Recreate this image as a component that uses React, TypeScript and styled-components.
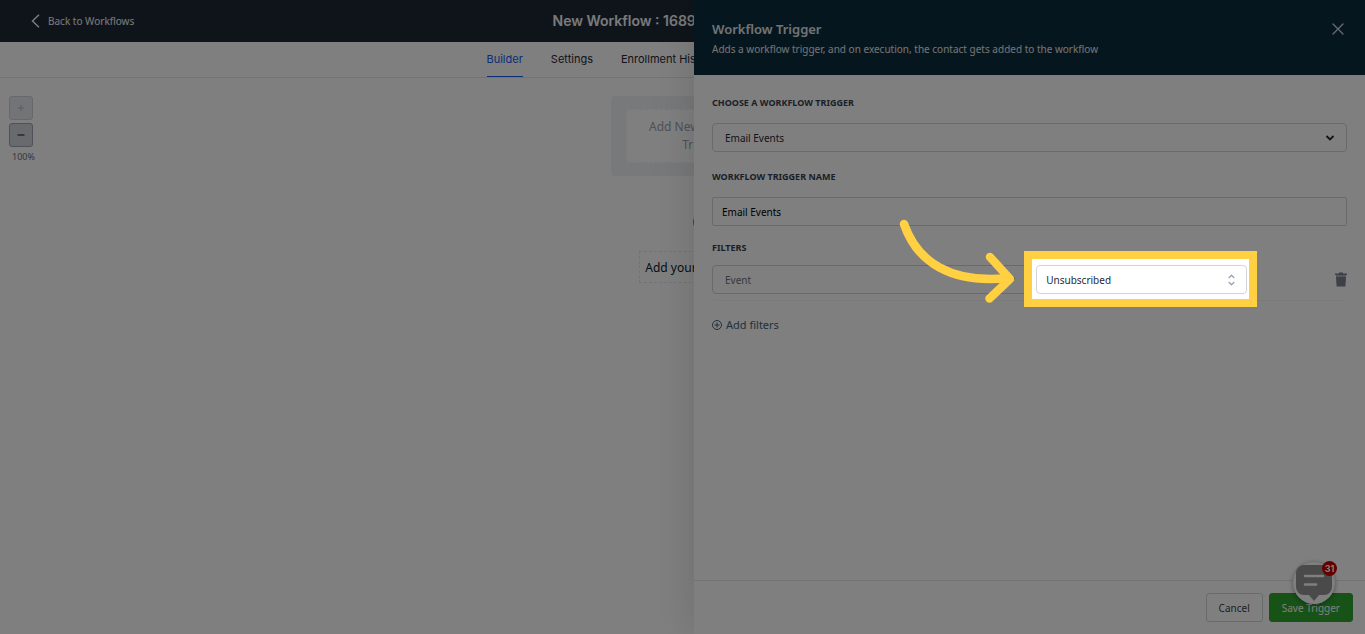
import React from "react";
import styled, { createGlobalStyle } from "styled-components";

const GlobalStyle = createGlobalStyle`
  *, *::before, *::after { box-sizing: border-box; }
  html, body { margin: 0; height: 100%; overflow: hidden; }
  body { background: #fff; font-family: "Noto Sans", "Open Sans", sans-serif; color: #1f2937; }
  #root { height: 100%; }
  button, input, select { font: inherit; color: inherit; }
  h1, h2, p { margin: 0; }
`;

const Page = styled.div`
  position: relative;
  height: 100%;
  display: flex;
  flex-direction: column;
`;

const TopBar = styled.header`
  flex: none;
  height: 42px;
  display: grid;
  grid-template-columns: 1fr 260px 1fr;
  align-items: center;
  background: #1f2937;
  color: #fff;
`;

const BackLink = styled.a`
  display: flex;
  align-items: center;
  gap: 8px;
  padding-left: 31px;
  color: #f3f4f6;
  font-size: 10px;
  line-height: 16px;
  text-decoration: none;
`;

const WorkflowTitle = styled.h1`
  font: 600 14px/20px Inter, sans-serif;
  white-space: nowrap;
  color: #f3f4f6;
`;

const Tabs = styled.nav`
  flex: none;
  height: 36px;
  display: flex;
  justify-content: center;
  border-bottom: 1px solid #e5e7eb;
`;

const TabList = styled.div`
  width: 392px;
  display: flex;
  gap: 28px;
`;

const Tab = styled.a<{ $active?: boolean }>`
  height: 35px;
  border-bottom: 1px solid ${(p) => (p.$active ? "#155eef" : "transparent")};
  color: ${(p) => (p.$active ? "#155eef" : "#1f2937")};
  font: 400 11px/34px Inter, sans-serif;
  white-space: nowrap;
  text-decoration: none;
`;

const Canvas = styled.main`
  flex: 1;
  display: flex;
  padding-top: 18px;
`;

const ZoomControls = styled.div`
  width: 40px;
  padding-left: 9px;
  display: flex;
  flex-direction: column;
  gap: 3px;
`;

const ZoomButton = styled.button`
  width: 24px;
  height: 24px;
  padding: 0;
  display: grid;
  place-items: center;
  border: 1px solid #9ca3af;
  border-radius: 3px;
  background: #d1d5db;
  color: #6b7280;
  &:disabled { opacity: 0.5; }
`;

const ZoomLevel = styled.span`
  padding-left: 3px;
  font-size: 9px;
  line-height: 14px;
  color: #6b7280;
`;

const Flow = styled.div`
  flex: 1;
  display: flex;
  flex-direction: column;
  align-items: center;
`;

const TriggerGroup = styled.div`
  width: 183px;
  padding: 13px 15px;
  border-radius: 4px;
  background: #f1f2f4;
`;

const AddTrigger = styled.button`
  width: 100%;
  height: 54px;
  padding: 0 20px;
  border: 1px dashed #f1f2f4;
  border-radius: 4px;
  background: #fff;
  color: #9ca3af;
  font-size: 12px;
  line-height: 18px;
`;

const StepDot = styled.button`
  width: 20px;
  height: 20px;
  margin: 36px 0 19px;
  padding: 0;
  border: 3px solid #64748b;
  border-radius: 50%;
  background: #fff;
`;

const AddAction = styled.button`
  height: 32px;
  padding: 0 5px;
  border: 1px dashed #e5e7eb;
  background: #fff;
  color: #111827;
  font-size: 12px;
`;

const Drawer = styled.aside`
  position: absolute;
  top: 0;
  right: 0;
  bottom: 0;
  width: 671px;
  max-width: 100%;
  display: flex;
  flex-direction: column;
  background: #fff;
  box-shadow: 0 0 40px rgba(0, 0, 0, 0.15);
`;

const DrawerHeader = styled.div`
  flex: none;
  height: 75px;
  padding: 19px 20px 0 18px;
  display: flex;
  justify-content: space-between;
  align-items: flex-start;
  background: #0b2d3d;
  color: #fff;
`;

const DrawerTitle = styled.h2`
  font-size: 13px;
  line-height: 20px;
  font-weight: 600;
  color: #e5e7eb;
`;

const DrawerSubtitle = styled.p`
  font-size: 10px;
  line-height: 20px;
  color: #e5e7eb;
`;

const IconButton = styled.button`
  padding: 0;
  display: flex;
  border: 0;
  background: none;
  color: #7a808c;
`;

const CloseButton = styled(IconButton)`
  margin-top: 3px;
  color: #d1d5f0;
`;

const DrawerBody = styled.form`
  flex: 1;
  padding: 20px 18px 0;
`;

const FieldLabel = styled.label`
  display: block;
  margin-bottom: 12px;
  font-size: 9px;
  line-height: 16px;
  font-weight: 700;
  text-transform: uppercase;
  color: #374151;
`;

const Field = styled.div`
  margin-bottom: 17px;
  & + & { margin-bottom: 14px; }
`;

const Control = styled.div`
  position: relative;
`;

const SelectBox = styled.select<{ $muted?: boolean; $tight?: boolean }>`
  display: block;
  width: 100%;
  height: 29px;
  padding: 0 ${(p) => (p.$tight ? 9 : 12)}px;
  appearance: none;
  border: 1px solid #d1d5db;
  border-radius: 4px;
  background: #fff;
  font-size: 10px;
  color: ${(p) => (p.$muted ? "#6b7280" : "#1f2937")};
`;

const TextInput = styled.input`
  display: block;
  width: 100%;
  height: 29px;
  padding: 0 9px;
  border: 1px solid #d1d5db;
  border-radius: 2px;
  font-size: 10px;
  color: #000;
`;

const SelectIcon = styled.svg`
  position: absolute;
  top: 50%;
  right: 12px;
  transform: translateY(-50%);
  pointer-events: none;
`;

const Filters = styled.fieldset`
  margin: 0;
  padding: 0 0 6px;
  min-width: 0;
  border: 1px solid #f3f4f6;
  border-width: 0 0 1px;
  border-radius: 4px;
`;

const FiltersTitle = styled.legend`
  padding: 0 0 9px;
  font-size: 9px;
  line-height: 16px;
  font-weight: 700;
  text-transform: uppercase;
  color: #374151;
`;

const FilterRow = styled.div`
  display: grid;
  grid-template-columns: 3fr 2fr 92px;
  gap: 8px;
  align-items: center;
`;

const TrashCell = styled.div`
  display: flex;
  justify-content: flex-end;
`;

/* Frame around the highlighted control; its spread shadow dims everything else. */
const Spotlight = styled.div`
  position: absolute;
  inset: -14px -10px -13px -12px;
  z-index: 20;
  border: 8px solid #ffd042;
  box-shadow: 0 0 0 3000px rgba(0, 0, 0, 0.5);
  pointer-events: none;
`;

const PointerArrow = styled.svg`
  position: absolute;
  top: -47px;
  left: -138px;
  z-index: 21;
  pointer-events: none;
`;

const AddFilters = styled.button`
  margin-top: 14px;
  padding: 0;
  display: flex;
  align-items: center;
  gap: 4px;
  border: 0;
  background: none;
  color: #3f6478;
  font-size: 11px;
  line-height: 20px;
`;

const DrawerFooter = styled.div`
  flex: none;
  padding: 12px;
  display: flex;
  justify-content: flex-end;
  gap: 6px;
  border-top: 1px solid #e5e7eb;
`;

const Button = styled.button<{ $primary?: boolean }>`
  height: 29px;
  padding: 0 12px;
  border: 1px solid ${(p) => (p.$primary ? "#2fa52f" : "#d1d5db")};
  border-radius: 3px;
  background: ${(p) => (p.$primary ? "#2fa52f" : "#fff")};
  color: ${(p) => (p.$primary ? "#fff" : "#374151")};
  font-size: 10px;
`;

const ChatButton = styled.button`
  position: fixed;
  right: 30px;
  bottom: 30px;
  z-index: 5;
  width: 42px;
  height: 42px;
  padding: 0;
  display: grid;
  place-items: center;
  border: 0;
  border-radius: 50%;
  background: #fff;
  box-shadow: 0 1px 5px rgba(0, 0, 0, 0.4);
`;

const ChatBadge = styled.span`
  position: absolute;
  top: -1px;
  right: -2px;
  width: 15px;
  height: 15px;
  border-radius: 50%;
  background: #c80000;
  color: #fff;
  font: 700 9px/15px Inter, sans-serif;
  text-align: center;
`;

export default function App() {
  return (
    <>
      <GlobalStyle />
      <Page>
        <TopBar>
          <BackLink href="#workflows">
            <svg width="9" height="14" viewBox="0 0 9 14" fill="none" stroke="currentColor" strokeWidth="1.5">
              <path d="M8 .7 1.5 7 8 13.3" />
            </svg>
            Back to Workflows
          </BackLink>
          <WorkflowTitle>New Workflow : 1689</WorkflowTitle>
        </TopBar>
        <Tabs>
          <TabList>
            <Tab href="#builder" $active>Builder</Tab>
            <Tab href="#settings">Settings</Tab>
            <Tab href="#history">Enrollment History</Tab>
          </TabList>
        </Tabs>
        <Canvas>
          <ZoomControls>
            <ZoomButton aria-label="Zoom in" disabled>
              <svg width="6" height="6" viewBox="0 0 6 6" stroke="currentColor"><path d="M3 0v6M0 3h6" /></svg>
            </ZoomButton>
            <ZoomButton aria-label="Zoom out">
              <svg width="8" height="8" viewBox="0 0 8 8" stroke="currentColor" strokeWidth="2"><path d="M.5 4h7" /></svg>
            </ZoomButton>
            <ZoomLevel>100%</ZoomLevel>
          </ZoomControls>
          <Flow>
            <TriggerGroup>
              <AddTrigger>Add New Workflow Trigger</AddTrigger>
            </TriggerGroup>
            <StepDot aria-label="Add step" />
            <AddAction>Add your first action</AddAction>
          </Flow>
        </Canvas>

        <Drawer aria-label="Workflow Trigger">
          <DrawerHeader>
            <div>
              <DrawerTitle>Workflow Trigger</DrawerTitle>
              <DrawerSubtitle>Adds a workflow trigger, and on execution, the contact gets added to the workflow</DrawerSubtitle>
            </div>
            <CloseButton aria-label="Close">
              <svg width="14" height="14" viewBox="0 0 14 14" stroke="currentColor" strokeWidth="1.3" strokeLinecap="round">
                <path d="m2 2 10 10M12 2 2 12" />
              </svg>
            </CloseButton>
          </DrawerHeader>
          <DrawerBody onSubmit={(e) => e.preventDefault()}>
            <Field>
              <FieldLabel htmlFor="trigger">Choose a workflow trigger</FieldLabel>
              <Control>
                <SelectBox id="trigger"><option>Email Events</option></SelectBox>
                <SelectIcon width="10" height="8" viewBox="0 0 10 8" fill="none" stroke="#1f2937" strokeWidth="1.8">
                  <path d="m1.5 2 3.5 3.5L8.500 2" />
                </SelectIcon>
              </Control>
            </Field>
            <Field>
              <FieldLabel htmlFor="trigger-name">Workflow trigger name</FieldLabel>
              <TextInput id="trigger-name" defaultValue="Email Events" />
            </Field>
            <Filters>
              <FiltersTitle>Filters</FiltersTitle>
              <FilterRow>
                <Control>
                  <SelectBox aria-label="Filter field" $muted><option>Event</option></SelectBox>
                  <SelectIcon width="10" height="8" viewBox="0 0 10 8" fill="none" stroke="#1f2937" strokeWidth="1.8">
                    <path d="m1.5 2 3.5 3.5L8.500 2" />
                  </SelectIcon>
                </Control>
                <Control>
                  <SelectBox aria-label="Event type" $tight><option>Unsubscribed</option></SelectBox>
                  <SelectIcon width="7" height="12" viewBox="0 0 7 12" fill="none" stroke="#9ca3af" strokeWidth="1.3">
                    <path d="M.7 4 3.500 1.200 6.300 4M.7 8l2.800 2.800L6.300 8" />
                  </SelectIcon>
                  <Spotlight />
                  <PointerArrow width="122" height="90" viewBox="898 218 122 90" fill="none" stroke="#ffd042" strokeWidth="8.500" strokeLinecap="round" strokeLinejoin="round">
                    <path d="M904 224C917 262 951 284 1008 278M990 257l20 22-20.500 19.500" />
                  </PointerArrow>
                </Control>
                <TrashCell>
                  <IconButton type="button" aria-label="Delete filter">
                    <svg width="12" height="15" viewBox="0 0 12 15" fill="currentColor">
                      <path d="M4 .5h4v1H4zM0 1.500h12v1.500H0z" />
                      <path d="M1 3h10v1.500H1z" opacity=".6" />
                      <path d="M1 4.500h10l-.6 10H1.600z" />
                    </svg>
                  </IconButton>
                </TrashCell>
              </FilterRow>
            </Filters>
            <AddFilters type="button">
              <svg width="10" height="10" viewBox="0 0 10 10" fill="none" stroke="currentColor">
                <circle cx="5" cy="5" r="4.500" />
                <path d="M5 2.500v5M2.500 5h5" />
              </svg>
              Add filters
            </AddFilters>
          </DrawerBody>
          <DrawerFooter>
            <Button type="button">Cancel</Button>
            <Button type="button" $primary>Save Trigger</Button>
          </DrawerFooter>
        </Drawer>

        <ChatButton aria-label="Open chat">
          <svg width="36" height="36" viewBox="0 0 36 36">
            <path d="M8 0h20a8 8 0 0 1 8 8v14a8 8 0 0 1-8 8h-5l-5 6-5-6H8a8 8 0 0 1-8-8V8a8 8 0 0 1 8-8z" fill="#959595" />
            <path d="M9 11h18M9 19.500h11" stroke="#fff" strokeWidth="2.500" strokeLinecap="round" />
          </svg>
          <ChatBadge>31</ChatBadge>
        </ChatButton>
      </Page>
    </>
  );
}
